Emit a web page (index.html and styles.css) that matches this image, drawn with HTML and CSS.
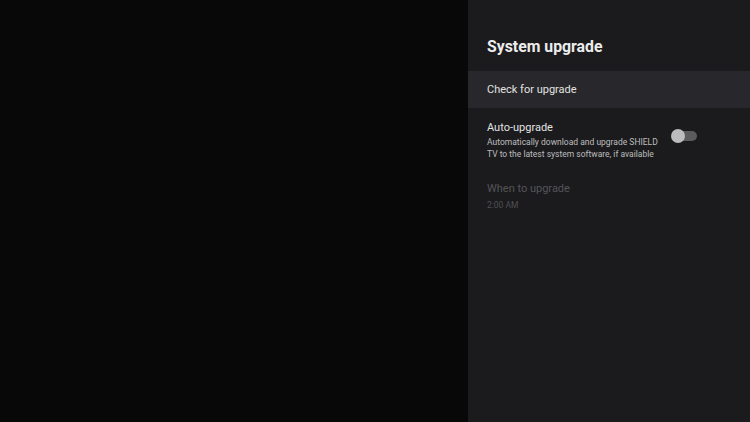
FILE: index.html
```html
<!DOCTYPE html>
<html>
<head>
<meta charset="utf-8">
<link rel="stylesheet" href="styles.css">
</head>
<body>
<div class="screen">
  <div class="backdrop"></div>
  <aside class="panel">
    <h1 class="title">System upgrade</h1>
    <div class="item selected">
      <div class="item-label">Check for upgrade</div>
    </div>
    <div class="item toggle-item">
      <div class="item-text">
        <div class="item-label">Auto-upgrade</div>
        <div class="item-desc">Automatically download and upgrade SHIELD<br>TV to the latest system software, if available</div>
      </div>
      <div class="switch"><div class="track"></div><div class="thumb"></div></div>
    </div>
    <div class="item disabled">
      <div class="item-label">When to upgrade</div>
      <div class="item-desc">2:00 AM</div>
    </div>
  </aside>
</div>
</body>
</html>
```
FILE: styles.css
```css
html, body {
  margin: 0;
  padding: 0;
  width: 750px;
  height: 422px;
  overflow: hidden;
  background: #080808;
  font-family: Roboto, "Noto Sans", sans-serif;
}
.screen {
  display: flex;
  width: 750px;
  height: 422px;
}
.backdrop {
  width: 468px;
  background: #080808;
}
.panel {
  flex: 1;
  background: #1b1b1e;
  display: flex;
  flex-direction: column;
}
.title {
  margin: 0;
  padding: 38px 19px 0 19px;
  height: 33px;
  font-size: 15.8px;
  font-weight: 700;
  color: #ececec;
  line-height: 18px;
}
.item {
  padding: 0 19px;
}
.item-label {
  font-size: 11px;
  line-height: 13px;
  color: #e2e2e2;
}
.item-desc {
  font-size: 8.5px;
  line-height: 12px;
  color: #bdbdbd;
}
.selected {
  background: #28282c;
  height: 37px;
  display: flex;
  align-items: center;
}
.toggle-item {
  display: flex;
  align-items: center;
  padding-top: 13px;
  padding-bottom: 14px;
}
.item-text {
  flex: 1;
}
.toggle-item .item-label {
  margin-bottom: 2px;
}
.switch {
  position: relative;
  width: 26px;
  height: 14px;
  margin-right: 34px;
  margin-top: -9px;
}
.track {
  position: absolute;
  left: 6px;
  top: 2px;
  width: 20px;
  height: 10px;
  border-radius: 5px;
  background: #5b5b5d;
}
.thumb {
  position: absolute;
  left: 0;
  top: 0;
  width: 14px;
  height: 14px;
  border-radius: 50%;
  background: #bcbcbc;
}
.disabled {
  padding-top: 8px;
}
.disabled .item-label {
  color: #545457;
  margin-bottom: 4px;
}
.disabled .item-desc {
  color: #505053;
}
```
